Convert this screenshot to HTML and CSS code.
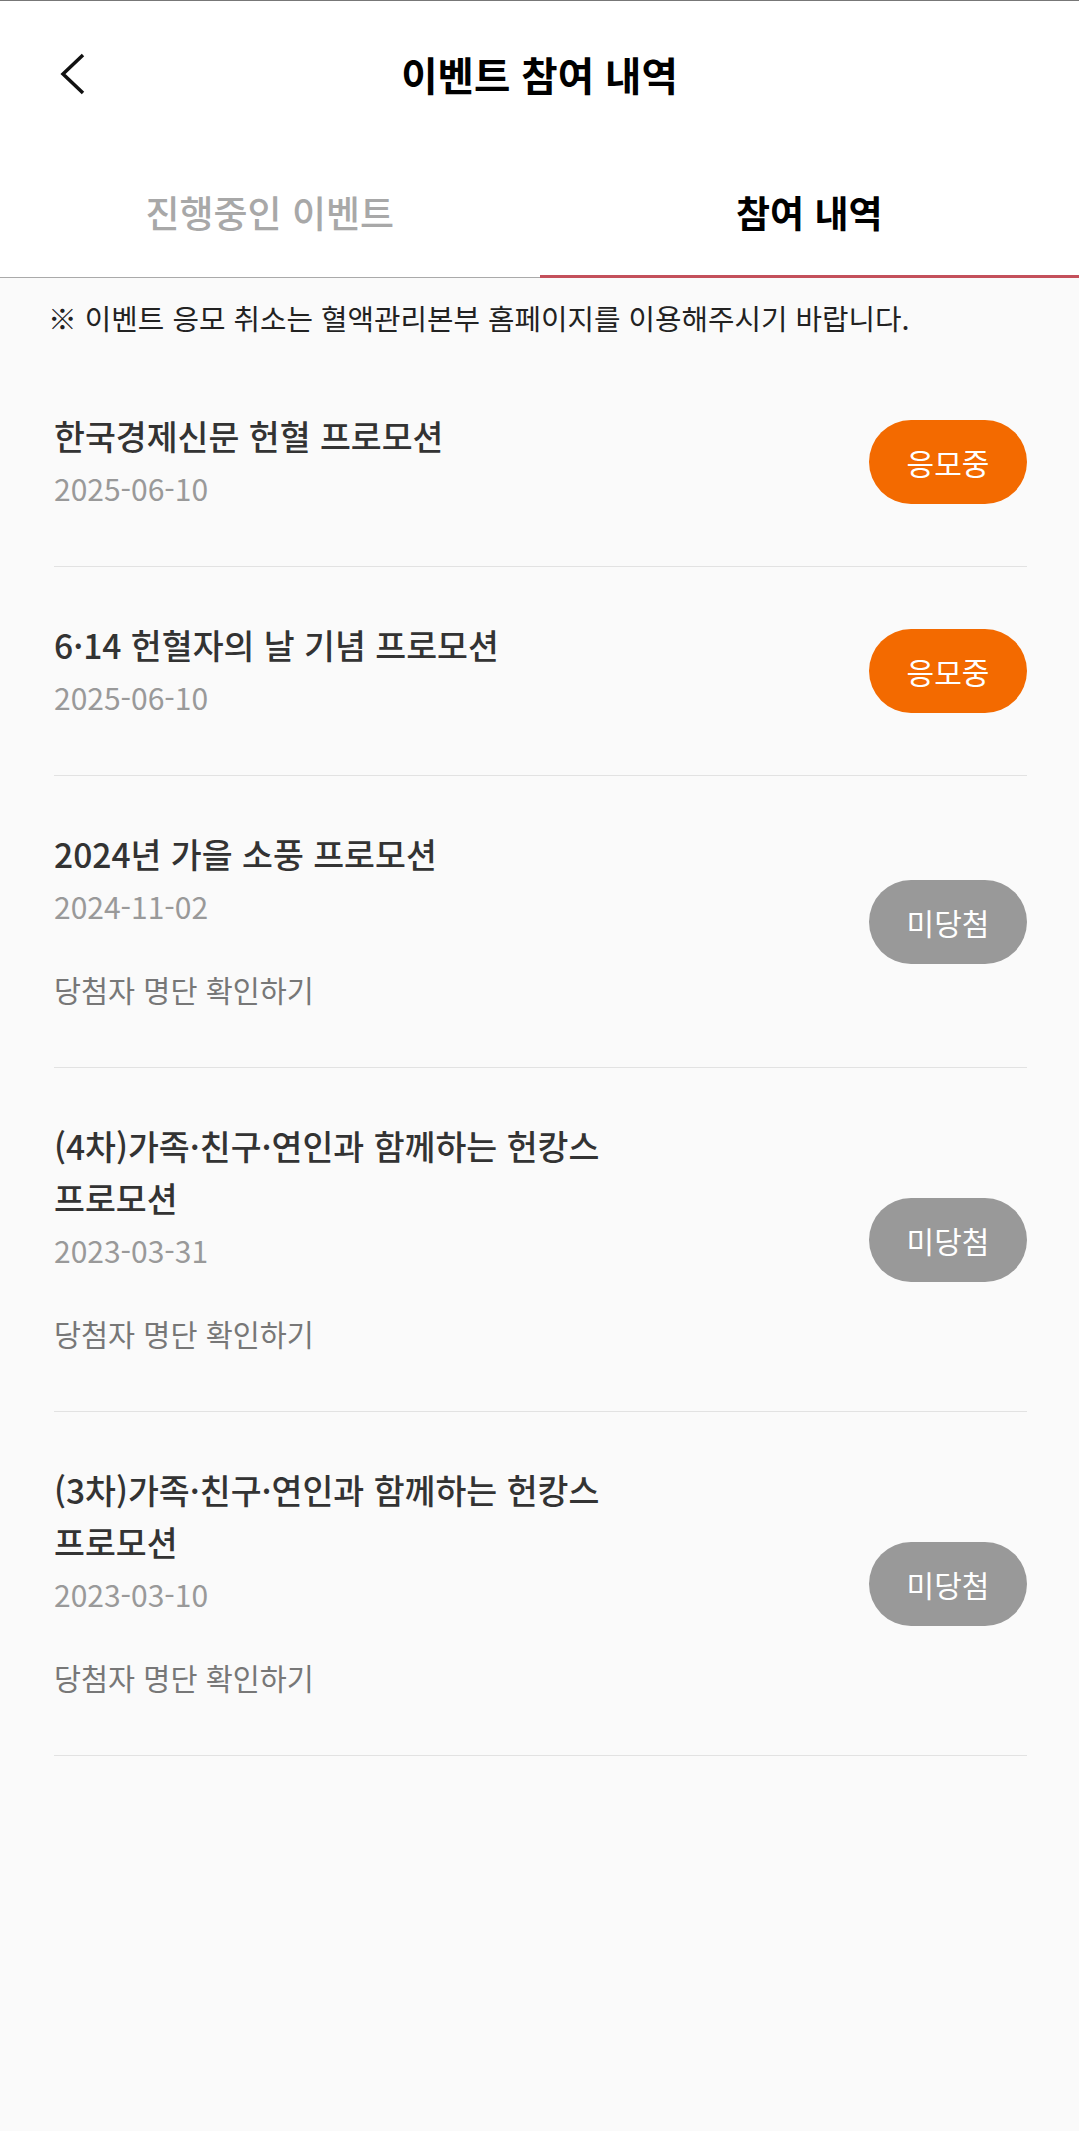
FILE: index.html
```html
<!DOCTYPE html>
<html lang="ko">

<head>
    <meta charset="UTF-8">
    <meta name="viewport" content="width=device-width, initial-scale=1.0">
    <title>이벤트 참여 내역</title>
    <link rel="stylesheet" href="styles.css">
</head>

<body>

    <div class="top">
        <header class="appbar">
            <button class="back" aria-label="뒤로">
                <svg width="30" height="44" viewBox="0 0 30 44">
                    <path d="M25 3 L5 22 L25 41" fill="none" stroke="#111" stroke-width="3.5" />
                </svg>
            </button>
            <h1>이벤트 참여 내역</h1>
            <span></span>
        </header>

        <nav class="tabs">
            <a class="tab">진행중인 이벤트</a>
            <a class="tab active">참여 내역</a>
        </nav>
    </div>

    <p class="notice">※ 이벤트 응모 취소는 혈액관리본부 홈페이지를 이용해주시기 바랍니다.</p>

    <ul class="history">
        <li class="item">
            <div class="info">
                <p class="title">한국경제신문 헌혈 프로모션</p>
                <p class="date">2025-06-10</p>
            </div>
            <span class="badge ongoing">응모중</span>
        </li>
        <li class="item">
            <div class="info">
                <p class="title">6·14 헌혈자의 날 기념 프로모션</p>
                <p class="date">2025-06-10</p>
            </div>
            <span class="badge ongoing">응모중</span>
        </li>
        <li class="item">
            <div class="info">
                <p class="title">2024년 가을 소풍 프로모션</p>
                <p class="date">2024-11-02</p>
                <a class="winners">당첨자 명단 확인하기</a>
            </div>
            <span class="badge lost">미당첨</span>
        </li>
        <li class="item">
            <div class="info">
                <p class="title">(4차)가족·친구·연인과 함께하는 헌캉스 프로모션</p>
                <p class="date">2023-03-31</p>
                <a class="winners">당첨자 명단 확인하기</a>
            </div>
            <span class="badge lost">미당첨</span>
        </li>
        <li class="item">
            <div class="info">
                <p class="title">(3차)가족·친구·연인과 함께하는 헌캉스 프로모션</p>
                <p class="date">2023-03-10</p>
                <a class="winners">당첨자 명단 확인하기</a>
            </div>
            <span class="badge lost">미당첨</span>
        </li>
    </ul>

</body>

</html>
```

FILE: styles.css
```css
body {
    margin: 0;
    min-height: 100vh;
    background: #fafafa;
    font-family: "Noto Sans CJK KR", "Noto Sans", sans-serif;
    color: #333;
    word-break: keep-all;
}

.top {
    background: #fff;
    border-top: 1px solid #777;
}

.appbar {
    display: grid;
    grid-template-columns: 1fr auto 1fr;
    align-items: center;
    height: 145px;
}

.back {
    justify-self: start;
    display: flex;
    margin-left: 58px;
    padding: 0;
    border: none;
    background: none;
}

.appbar h1 {
    margin: 0;
    font-size: 39.5px;
    font-weight: 700;
    color: #000;
}

.tabs {
    display: flex;
    border-bottom: 1px solid #aaa;
}

.tab {
    flex: 1;
    position: relative;
    display: flex;
    justify-content: center;
    align-items: center;
    height: 131px;
    font-size: 37px;
    font-weight: 500;
    color: #a8a8a8;
}

.tab.active {
    color: #000;
    font-weight: 700;
}

.tab.active::after {
    content: "";
    position: absolute;
    left: 0;
    right: 0;
    bottom: -1px;
    height: 3px;
    background: #c4505b;
}

.notice {
    margin: 0;
    padding: 20px 0 20px 48px;
    font-size: 28.8px;
    line-height: 40px;
    color: #222;
}

.history {
    list-style: none;
    margin: 0 52px 0 54px;
    padding: 0;
}

.item {
    display: flex;
    justify-content: space-between;
    align-items: center;
    padding: 52px 0;
    border-bottom: 1px solid #e2e2e2;
}

.info {
    display: flex;
    flex-direction: column;
    max-width: 600px;
}

.info p {
    margin: 0;
}

.title {
    font-size: 33.6px;
    font-weight: 500;
    line-height: 52px;
    color: #333;
}

.date {
    font-size: 30px;
    line-height: 52px;
    color: #999;
}

.winners {
    margin-top: 31px;
    font-size: 29.4px;
    line-height: 52px;
    color: #777;
}

.badge {
    flex-shrink: 0;
    display: flex;
    justify-content: center;
    align-items: center;
    width: 158px;
    height: 84px;
    border-radius: 42px;
    font-size: 30px;
    color: #fff;
}

.badge.ongoing {
    background: #f36a00;
}

.badge.lost {
    background: #999;
}
```
